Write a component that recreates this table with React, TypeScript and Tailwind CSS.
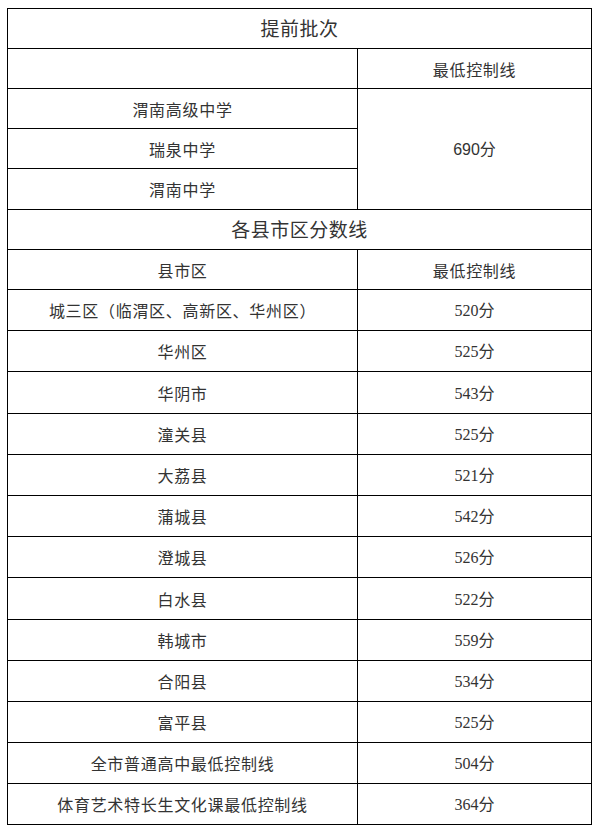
const districts: [string, string][] = [
  ["城三区（临渭区、高新区、华州区）", "520"],
  ["华州区", "525"],
  ["华阴市", "543"],
  ["潼关县", "525"],
  ["大荔县", "521"],
  ["蒲城县", "542"],
  ["澄城县", "526"],
  ["白水县", "522"],
  ["韩城市", "559"],
  ["合阳县", "534"],
  ["富平县", "525"],
  ["全市普通高中最低控制线", "504"],
  ["体育艺术特长生文化课最低控制线", "364"],
];

const cjk = { fontFamily: '"Noto Sans CJK SC", sans-serif' };
const num = { fontFamily: '"Liberation Serif", "Noto Sans CJK SC", serif' };

export default function App() {
  return (
    <div className="min-h-[831px] bg-white pl-[7px] pt-[8px]" style={cjk}>
      <table className="w-[584px] table-fixed border-collapse text-[#333]">
        <colgroup>
          <col className="w-[350px]" />
          <col className="w-[234px]" />
        </colgroup>
        <tbody>
          <tr className="h-[40px]">
            <td colSpan={2} className="border border-black p-0 text-center text-[19px] tracking-[0.5px]">
              提前批次
            </td>
          </tr>
          <tr className="h-[40px]">
            <td className="border border-black p-0" />
            <td className="border border-black p-0 text-center text-[16px] tracking-[0.7px]">最低控制线</td>
          </tr>
          <tr className="h-[40px]">
            <td className="border border-black p-0 text-center text-[16px] tracking-[0.7px]">渭南高级中学</td>
            <td rowSpan={3} className="border border-black p-0 text-center text-[16px]">
              <span style={{ fontFamily: '"Liberation Sans", "Noto Sans CJK SC", sans-serif' }}>690</span>分
            </td>
          </tr>
          <tr className="h-[40px]">
            <td className="border border-black p-0 text-center text-[16px] tracking-[0.7px]">瑞泉中学</td>
          </tr>
          <tr className="h-[41px]">
            <td className="border border-black p-0 text-center text-[16px] tracking-[0.7px]">渭南中学</td>
          </tr>
          <tr className="h-[40px]">
            <td colSpan={2} className="border border-black p-0 text-center text-[19px] tracking-[0.5px]">
              各县市区分数线
            </td>
          </tr>
          <tr className="h-[40px]">
            <td className="border border-black p-0 text-center text-[16px] tracking-[0.7px]">县市区</td>
            <td className="border border-black p-0 text-center text-[16px] tracking-[0.7px]">最低控制线</td>
          </tr>
          {districts.map(([name, score], i) => (
            <tr key={name} className={i === 2 || i === 7 ? "h-[42px]" : "h-[41px]"}>
              <td className="border border-black p-0 text-center text-[16px] tracking-[0.7px]">{name}</td>
              <td className="border border-black p-0 text-center text-[16px]">
                <span style={num}>{score}</span>分
              </td>
            </tr>
          ))}
        </tbody>
      </table>
    </div>
  );
}
